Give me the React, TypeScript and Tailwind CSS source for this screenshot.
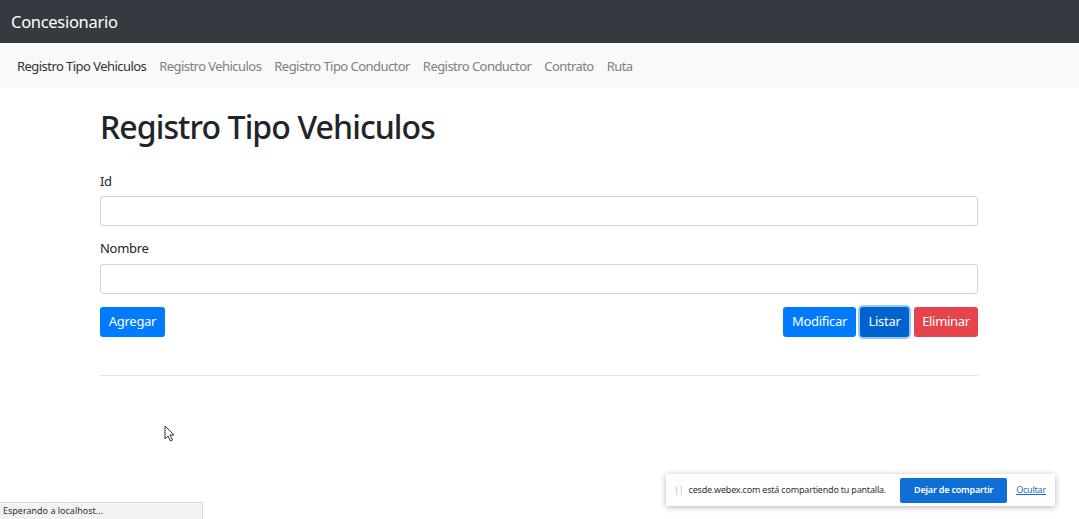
export default function App() {
  return (
    <div className="relative h-[519px] w-[1079px] overflow-hidden bg-white font-['Noto_Sans',sans-serif] text-[#212529]">
      <header className="flex h-[43px] items-center bg-[#343a40] px-[11px] pt-[1px]">
        <span className="text-[16.5px] tracking-[-0.3px] text-white">Concesionario</span>
      </header>

      <nav className="flex h-[44px] items-center gap-[13px] bg-[#f8f9fa] px-[17px] pt-[3px] text-[13px] tracking-[-0.55px] text-[#808080]">
        <a className="text-[#333]">Registro Tipo Vehiculos</a>
        <a>Registro Vehiculos</a>
        <a>Registro Tipo Conductor</a>
        <a>Registro Conductor</a>
        <a>Contrato</a>
        <a>Ruta</a>
      </nav>

      <main className="mx-[100px] w-[878px]">
        <h1 className="mt-[16px] text-[32px] leading-[48px] font-medium tracking-[-0.9px] text-[#212529]">Registro Tipo Vehiculos</h1>

        <div className="mt-[20px]">
          <label className="block text-[13px] leading-[20px] tracking-[-0.3px]">Id</label>
          <input className="mt-[5px] block h-[30px] w-full rounded-[3px] border border-[#ced4da] bg-white" />
        </div>

        <div className="mt-[12px]">
          <label className="block text-[13px] leading-[20px] tracking-[-0.3px]">Nombre</label>
          <input className="mt-[6px] block h-[30px] w-full rounded-[3px] border border-[#ced4da] bg-white" />
        </div>

        <div className="mt-[13px] flex items-center text-[13px] tracking-[-0.3px]">
          <button className="h-[30px] w-[65px] rounded-[3px] bg-[#007bff] text-white">Agregar</button>
          <div className="ml-auto flex gap-[4px]">
            <button className="h-[30px] w-[73px] rounded-[3px] bg-[#007bff] text-white">Modificar</button>
            <button className="h-[30px] w-[49px] rounded-[3px] bg-[#0062cc] text-white shadow-[0_0_0_2px_rgba(38,143,255,0.5)]">Listar</button>
            <button className="ml-[1px] h-[30px] w-[64px] rounded-[3px] bg-[#e5444d] text-white">Eliminar</button>
          </div>
        </div>

        <hr className="mt-[38px] border-t border-[#e3e3e3]" />
      </main>

      <svg className="absolute left-[164px] top-[425px]" width="12" height="18" viewBox="0 0 12 18">
        <path d="M1 1 L1 14 L4 11 L6.5 16 L8.5 15 L6 10 L10 10 Z" fill="white" stroke="#333" strokeWidth="1" />
      </svg>

      <div className="absolute bottom-0 left-0 flex h-[17px] w-[203px] items-center border-t border-r border-[#d9d9d9] bg-[#f2f2f2] px-[3px] text-[9px] text-[#333]">
        Esperando a localhost...
      </div>

      <div className="absolute left-[666px] top-[474px] flex h-[32px] w-[389px] items-center whitespace-nowrap bg-white pl-[8px] pr-[9px] text-[9px] tracking-[-0.2px] shadow-[0_1px_6px_rgba(0,0,0,0.3)]">
        <span className="mr-[5px] text-[#bbb]">||</span>
        <span className="text-[#333]">cesde.webex.com está compartiendo tu pantalla.</span>
        <button className="ml-auto h-[25px] w-[107px] rounded-[2px] bg-[#0f6fd6] text-[9px] font-semibold text-white">Dejar de compartir</button>
        <a className="ml-[9px] text-[#1a6ad6] underline">Ocultar</a>
      </div>
    </div>
  );
}
